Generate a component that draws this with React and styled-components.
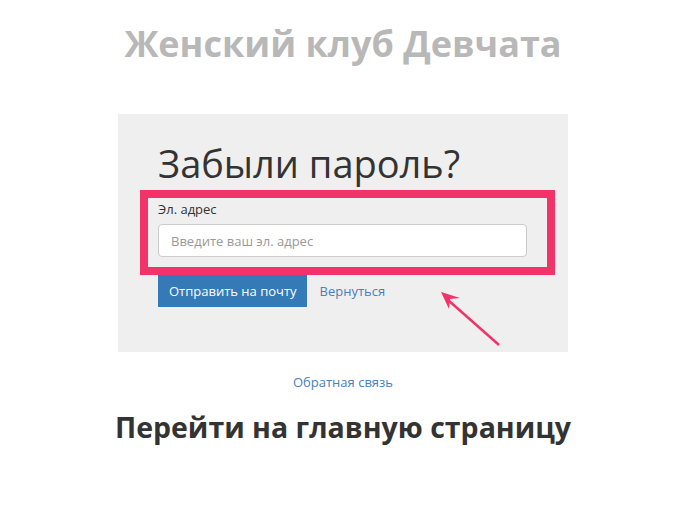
import React from "react";
import styled, { createGlobalStyle } from "styled-components";

const Global = createGlobalStyle`
  body {
    margin: 0;
    background: #fff;
    font-family: "Open Sans", "Liberation Sans", Arial, sans-serif;
    color: #333;
  }
`;

const Page = styled.div`
  width: 676px;
  padding: 22px 0 0 10px;
  box-sizing: border-box;
  display: flex;
  flex-direction: column;
  align-items: center;
`;

const SiteTitle = styled.h1`
  margin: 0 0 48px;
  font-size: 36px;
  line-height: 44px;
  font-weight: 700;
  color: #b8b8b8;
`;

const Panel = styled.div`
  position: relative;
  width: 450px;
  box-sizing: border-box;
  padding: 28px 40px 45px;
  background: #efefef;
`;

const Heading = styled.h2`
  margin: 0 0 6px;
  font-size: 38px;
  line-height: 42px;
  font-weight: 400;
  color: #333;
`;

const Highlight = styled.div`
  margin-left: -18px;
  width: 415px;
  box-sizing: border-box;
  border: 8px solid #f2336a;
  padding: 3px 20px 10px 10px;
`;

const Label = styled.label`
  display: block;
  font-size: 13px;
  line-height: 17px;
  margin-bottom: 6px;
  color: #333;
`;

const Input = styled.input`
  display: block;
  width: 100%;
  height: 33px;
  box-sizing: border-box;
  padding: 6px 12px;
  font-family: inherit;
  font-size: 13px;
  color: #555;
  background: #fff;
  border: 1px solid #ccc;
  border-radius: 4px;
  &::placeholder {
    color: #999;
  }
`;

const Actions = styled.div`
  display: flex;
  align-items: center;
  gap: 13px;
`;

const Button = styled.button`
  height: 32px;
  padding: 0 10px 0 11px;
  border: 0;
  border-radius: 0;
  background: #337ab7;
  color: #fff;
  font-family: inherit;
  font-size: 13px;
`;

const Link = styled.a`
  color: #4a7ebf;
  font-size: 13px;
  text-decoration: none;
`;

const Arrow = styled.svg`
  position: absolute;
  left: 318px;
  top: 172px;
`;

const Footer = styled.div`
  margin-top: 21px;
  font-size: 13px;
`;

const BigLink = styled.h2`
  margin: 17px 0 0;
  font-size: 28.5px;
  font-weight: 700;
  color: #333;
`;

export default function App() {
  return (
    <>
      <Global />
      <Page>
        <SiteTitle>Женский клуб Девчата</SiteTitle>
        <Panel>
          <Heading>Забыли пароль?</Heading>
          <Highlight>
            <Label>Эл. адрес</Label>
            <Input placeholder="Введите ваш эл. адрес" />
          </Highlight>
          <Actions>
            <Button>Отправить на почту</Button>
            <Link href="#">Вернуться</Link>
          </Actions>
          <Arrow width="70" height="70" viewBox="0 0 70 70">
            <line x1="63" y1="59" x2="12" y2="14" stroke="#f2336a" strokeWidth="2.5" />
            <path d="M5 6 L24 12 L14 13 L13 23 Z" fill="#f2336a" />
          </Arrow>
        </Panel>
        <Footer>
          <Link href="#">Обратная связь</Link>
        </Footer>
        <BigLink>Перейти на главную страницу</BigLink>
      </Page>
    </>
  );
}
